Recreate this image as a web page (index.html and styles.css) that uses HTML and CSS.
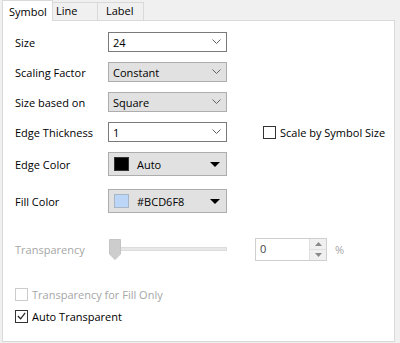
FILE: index.html
```html
<!DOCTYPE html>
<html>
<head>
<meta charset="utf-8">
<link rel="stylesheet" href="styles.css">
</head>
<body>
<div class="dialog">
  <div class="tabs">
    <div class="tab active">Symbol</div>
    <div class="tab t-line">Line</div>
    <div class="tab t-label">Label</div>
  </div>
  <div class="panel">
    <div class="row">
      <div class="lbl">Size</div>
      <div class="combo edit"><span>24</span><svg class="chev" width="9" height="6" viewBox="0 0 9 6"><path d="M0.5 0.5 L4.5 4.5 L8.5 0.5" fill="none" stroke="#606060" stroke-width="1"/></svg></div>
    </div>
    <div class="row">
      <div class="lbl">Scaling Factor</div>
      <div class="combo list"><span>Constant</span><svg class="chev" width="9" height="6" viewBox="0 0 9 6"><path d="M0.5 0.5 L4.5 4.5 L8.5 0.5" fill="none" stroke="#606060" stroke-width="1"/></svg></div>
    </div>
    <div class="row">
      <div class="lbl">Size based on</div>
      <div class="combo list"><span>Square</span><svg class="chev" width="9" height="6" viewBox="0 0 9 6"><path d="M0.5 0.5 L4.5 4.5 L8.5 0.5" fill="none" stroke="#606060" stroke-width="1"/></svg></div>
    </div>
    <div class="row">
      <div class="lbl">Edge Thickness</div>
      <div class="combo edit"><span>1</span><svg class="chev" width="9" height="6" viewBox="0 0 9 6"><path d="M0.5 0.5 L4.5 4.5 L8.5 0.5" fill="none" stroke="#606060" stroke-width="1"/></svg></div>
      <label class="check scale"><span class="box"></span><span>Scale by Symbol Size</span></label>
    </div>
    <div class="row tall">
      <div class="lbl">Edge Color</div>
      <div class="combo color"><span class="swatch black"></span><span class="ctext">Auto</span><svg class="tri" width="10" height="5" viewBox="0 0 10 5"><path d="M0 0 L10 0 L5 5 Z" fill="#000"/></svg></div>
    </div>
    <div class="row tall fill">
      <div class="lbl">Fill Color</div>
      <div class="combo color"><span class="swatch blue"></span><span class="ctext">#BCD6F8</span><svg class="tri" width="10" height="5" viewBox="0 0 10 5"><path d="M0 0 L10 0 L5 5 Z" fill="#000"/></svg></div>
    </div>
    <div class="row trans">
      <div class="lbl disabled">Transparency</div>
      <div class="slider">
        <div class="track"></div>
        <svg class="thumb" width="12" height="21" viewBox="0 0 12 21"><path d="M0.5 0.5 H11.5 V15 L6 20.5 L0.5 15 Z" fill="#cdcdcd" stroke="#c4c4c4"/></svg>
      </div>
      <div class="spin">
        <span class="stext">0</span>
        <div class="sbtns">
          <div class="sbtn"><svg width="7" height="4" viewBox="0 0 7 4"><path d="M0 4 L7 4 L3.5 0 Z" fill="#8a8a8a"/></svg></div>
          <div class="sbtn"><svg width="7" height="4" viewBox="0 0 7 4"><path d="M0 0 L7 0 L3.5 4 Z" fill="#8a8a8a"/></svg></div>
        </div>
      </div>
      <span class="pct">%</span>
    </div>
    <label class="check off first"><span class="box"></span><span>Transparency for Fill Only</span></label>
    <label class="check on"><span class="box"><svg width="12" height="12" viewBox="0 0 12 12"><path d="M2 6 L5 9 L10 2.5" fill="none" stroke="#222" stroke-width="1.3"/></svg></span><span>Auto Transparent</span></label>
  </div>
</div>
</body>
</html>
```
FILE: styles.css
```css
* { box-sizing: border-box; }
html, body { margin: 0; padding: 0; }
body {
  width: 400px;
  height: 343px;
  background: #f0f0f0;
  font-family: "Open Sans", "Noto Sans", sans-serif;
  font-size: 11px;
  color: #000;
  overflow: hidden;
}
.dialog { padding-left: 2px; width: 395px; }
.tabs { display: flex; height: 20px; align-items: flex-end; position: relative; z-index: 2; }
.tab {
  height: 18px;
  border: 1px solid #d9d9d9;
  border-bottom: none;
  background: #f0f0f0;
  padding: 0 0 0 0;
  line-height: 16px;
  font-size: 11px;
  margin-left: -1px;
}
.tab.active { height: 21px; background: #fff; margin-left: 0; width: 51px; padding-left: 6px; line-height: 21px; margin-bottom: -1px; }
.t-line { width: 46px; padding-left: 3px; }
.t-label { width: 47px; padding-left: 8px; }
.panel {
  background: #fff;
  border: 1px solid #d9d9d9;
  height: 322px;
  padding: 11px 0 0 12px;
  display: flex;
  flex-direction: column;
  gap: 10px;
}
.row { display: flex; align-items: center; height: 20px; }
.row.tall { height: 24px; }
.row.fill { margin-top: 3px; }
.row.trans { height: 23px; margin-top: 15px; }
.lbl { width: 93px; flex: none; }
.disabled { color: #a6a6a6; }
.combo {
  width: 119px;
  height: 20px;
  display: flex;
  align-items: center;
  padding-left: 4px;
  padding-right: 5px;
  position: relative;
}
.combo span { flex: 1; }
.combo.edit { background: #fff; border: 1px solid #7a7a7a; }
.combo.list { background: #e1e1e1; border: 1px solid #adadad; }
.combo.color { background: #e1e1e1; border: 1px solid #adadad; height: 24px; padding-left: 5px; padding-right: 6px; }
.chev { flex: none; }
.swatch { flex: none !important; width: 15px; height: 14px; margin-right: 8px; }
.swatch.black { background: #000; border: 1px solid #333; }
.swatch.blue { background: #bcd6f8; border: 1px solid #a8b6c8; }
.ctext { flex: 1; }
.tri { flex: none; }
.check { display: flex; align-items: center; height: 14px; }
.check .box {
  width: 13px; height: 13px; border: 1px solid #333; background: #fff;
  margin-right: 4px; display: flex; align-items: center; justify-content: center; flex: none;
}
.check.scale { margin-left: 36px; }
.check.off { color: #a6a6a6; }
.check.off .box { border-color: #cccccc; }
.check.first { margin-top: 16px; }
.check.on { margin-top: -2px; }
.slider { width: 118px; height: 23px; position: relative; flex: none; margin-left: 1px; }
.track { position: absolute; left: 2px; right: 0; top: 9px; height: 4px; background: #e7e7e7; border: 1px solid #dcdcdc; }
.thumb { position: absolute; left: 0; top: 1px; }
.spin {
  margin-left: 28px;
  width: 72px; height: 23px;
  border: 1px solid #cfcfcf;
  background: #fff;
  display: flex;
}
.stext { flex: 1; padding-left: 4px; line-height: 19px; color: #444; }
.sbtns { width: 17px; display: flex; flex-direction: column; border-left: 1px solid #e0e0e0; background: #f0f0f0; }
.sbtn { flex: 1; display: flex; align-items: center; justify-content: center; }
.sbtn + .sbtn { border-top: 1px solid #e0e0e0; }
.pct { margin-left: 8px; color: #a6a6a6; }
```
